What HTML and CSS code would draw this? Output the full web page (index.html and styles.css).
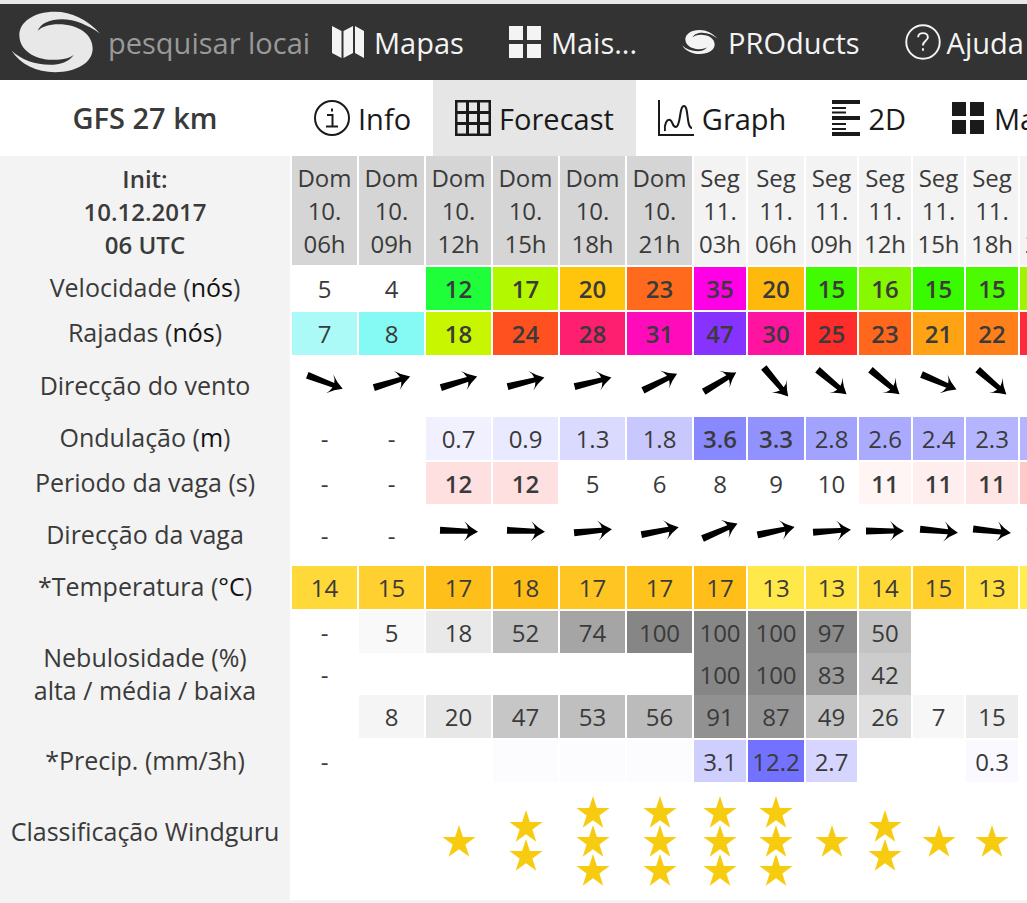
FILE: index.html
```html
<!DOCTYPE html>
<html lang="pt">
<head>
    <meta charset="UTF-8">
    <meta name="viewport" content="width=device-width, initial-scale=1.0">
    <title>Windguru - GFS 27 km</title>
    <link rel="stylesheet" href="styles.css">
</head>
<body>
    <!-- Shared shapes -->
    <svg class="defs" aria-hidden="true">
        <symbol id="swirl" viewBox="33 36 270 185">
            <path d="M300 103C262 62 215 38 165 38C100 38 58 70 58 108C58 150 100 182 160 182C190 182 212 176 222 166C208 188 180 197 150 197C105 197 65 182 35 155C60 196 110 219 165 219C230 219 278 190 278 148C278 105 235 75 175 75C148 75 125 82 113 95C122 72 150 60 185 60C225 60 265 78 300 103Z"/>
        </symbol>
        <symbol id="tiles" viewBox="0 0 32 32">
            <path d="M0 0H14V14H0ZM18 0H32V14H18ZM0 18H14V32H0ZM18 18H32V32H18Z"/>
        </symbol>
        <symbol id="arrow" viewBox="-20 -20 40 40">
            <path d="M-19 -3.500L9 -2.500Q8 -7 5 -10Q11 -4 19 0Q11 4 5 10Q8 7 9 2.500L-19 3.500Z"/>
        </symbol>
        <symbol id="star" viewBox="0 0 34 32">
            <path d="M17 0L20.9 12.1H33.6L23.4 19.6L27.3 31.7L17 24.2L6.7 31.7L10.6 19.6L.4 12.1H13.1Z"/>
        </symbol>
    </svg>

    <!-- Top bar -->
    <header class="topbar">
        <a href="#" class="logo" aria-label="Windguru"><svg><use href="#swirl"/></svg></a>
        <input type="text" class="search" placeholder="pesquisar locai" aria-label="pesquisar locais">
        <nav class="menu">
            <a href="#">
                <svg width="32" height="32" viewBox="0 0 32 32"><path d="M0 0L9.500 5V32L0 27ZM11.500 5L21 0V27L11.500 32ZM23 0L32 5V32L23 27Z"/></svg>
                Mapas
            </a>
            <a href="#"><svg width="32" height="32"><use href="#tiles"/></svg>Mais...</a>
            <a href="#"><svg width="36" height="28"><use href="#swirl"/></svg>PROducts</a>
            <a href="#" class="help">
                <svg width="36" height="36" viewBox="0 0 37 37" class="line">
                    <circle cx="18.500" cy="18.500" r="17.200"/>
                    <path d="M13.500 13.500C13.500 8 23.500 8 23.500 13.500C23.500 17.500 18.500 17 18.500 22M18.500 25V27.500"/>
                </svg>
                Ajuda
            </a>
        </nav>
    </header>

    <!-- Forecast tabs -->
    <nav class="tabs">
        <strong class="model">GFS 27 km</strong>
        <a href="#">
            <svg width="36" height="36" viewBox="0 0 36 36" class="line">
                <circle cx="18" cy="18" r="17"/>
                <path d="M18 8.500V11.500M13 15H18.500V26M12 26.500H24"/>
            </svg>
            Info
        </a>
        <a href="#" class="active">
            <svg width="36" height="36" viewBox="0 0 36 36" class="line grid">
                <path d="M1 1H35V35H1ZM12.500 1V35M23.500 1V35M1 12.500H35M1 23.500H35"/>
            </svg>
            Forecast
        </a>
        <a href="#">
            <svg width="36" height="36" viewBox="0 0 36 36" class="line">
                <path d="M1 0V35H36"/>
                <path d="M7 31C6 24 9 19 12 20C15 21 14 27 18 27C23 26 21 6 26 6C31 6 28 28 34 28"/>
            </svg>
            Graph
        </a>
        <a href="#">
            <svg width="30" height="36" viewBox="0 0 30 36">
                <path d="M2 0H30V4H2ZM2 16H30V20H2ZM2 32H30V36H2ZM2 7H16V9H2ZM2 11.500H16V13.500H2ZM2 23H16V25H2ZM2 28H16V30H2Z"/>
            </svg>
            2D
        </a>
        <a href="#"><svg width="36" height="32"><use href="#tiles"/></svg>Mais</a>
    </nav>

    <!-- Forecast table -->
    <main class="forecast">
        <table>
            <colgroup>
                <col class="col-label">
                <col span="6" class="col-wide">
                <col class="col-mid">
                <col class="col-max">
                <col class="col-min">
                <col class="col-mid">
                <col class="col-min">
                <col span="2" class="col-mid">
            </colgroup>
            <thead>
                <tr id="head"><th scope="row" class="init">Init:<br>10.12.2017<br>06 UTC</th></tr>
            </thead>
            <tbody>
                <tr id="speed"><th scope="row">Velocidade (<span>nós</span>)</th></tr>
                <tr id="gust"><th scope="row">Rajadas (<span>nós</span>)</th></tr>
                <tr id="winddir" class="tall"><th scope="row">Direcção do vento</th></tr>
                <tr id="wave"><th scope="row">Ondulação (<span>m</span>)</th></tr>
                <tr id="period" class="low"><th scope="row">Periodo da vaga (s)</th></tr>
                <tr id="wavedir" class="tall"><th scope="row">Direcção da vaga</th></tr>
                <tr id="temp"><th scope="row">*Temperatura (<span>°C</span>)</th></tr>
                <tr id="high" class="cloud"><th scope="row" rowspan="3">Nebulosidade (%)<br>alta / média / baixa</th></tr>
                <tr id="medium" class="cloud"></tr>
                <tr id="base"></tr>
                <tr id="precip" class="low"><th scope="row">*Precip. (mm/3h)</th></tr>
                <tr id="rating" class="rating"><th scope="row">Classificação Windguru</th></tr>
            </tbody>
        </table>
    </main>

    <script src="script.js"></script>
</body>
</html>
```
FILE: styles.css
```css
body {
    margin: 0;
    background-color: #f3f3f3;
    color: #3a3a3a;
    font-family: "Open Sans", sans-serif;
    font-size: 24px;
    overflow-x: hidden;
}

a {
    color: inherit;
    text-decoration: none;
}

svg {
    flex: none;
    fill: currentColor;
}

.defs {
    position: absolute;
    width: 0;
    height: 0;
}

.line {
    fill: none;
    stroke: currentColor;
    stroke-width: 2;
}

.grid {
    stroke-width: 3;
}

/* Top bar */
.topbar {
    display: flex;
    align-items: center;
    height: 76px;
    border-top: 4px solid #e8e8e8;
    background-color: #333333;
    color: #f4f4f4;
    overflow: hidden;
}

.logo {
    flex: none;
    margin-left: 11px;
    color: #e8e8e8;
}

.logo svg {
    display: block;
    width: 90px;
    height: 62px;
}

.search {
    flex: none;
    box-sizing: border-box;
    width: 231px;
    padding: 0 0 0 7px;
    border: none;
    background: none;
    color: #f4f4f4;
    font: inherit;
    font-size: 29px;
}

.search::placeholder {
    color: #999999;
    opacity: 1;
}

.menu {
    display: flex;
    gap: 45px;
    font-size: 29px;
    white-space: nowrap;
}

.menu a {
    display: flex;
    align-items: center;
    gap: 10px;
}

.menu .help {
    gap: 6px;
}

/* Tabs */
.tabs {
    display: flex;
    height: 76px;
    background-color: #ffffff;
    font-size: 29px;
    white-space: nowrap;
    overflow: hidden;
}

.model {
    flex: none;
    width: 290px;
    margin-right: 2px;
    font-size: 29px;
    line-height: 76px;
    font-weight: 600;
    text-align: center;
}

.tabs a {
    display: flex;
    flex: none;
    align-items: center;
    gap: 8px;
    padding: 0 22px;
    color: #1a1a1a;
}

.tabs .active {
    background-color: #e6e6e6;
}

/* Forecast table */
.forecast {
    overflow: hidden;
}

table {
    width: 1074px;
    table-layout: fixed;
    border-spacing: 0;
    background-color: #ffffff;
    line-height: 33px;
    text-align: center;
}

.col-label { width: 292px; }
.col-wide { width: 67px; }
.col-max { width: 58px; }
.col-mid { width: 54px; }
.col-min { width: 53px; }

tr {
    height: 45px;
}

th,
td {
    box-sizing: border-box;
    padding: 0;
    border-right: 2px solid #ffffff;
    font-weight: 400;
    white-space: nowrap;
}

td,
thead th {
    border-bottom: 2px solid #ffffff;
}

th {
    background-color: #f3f3f3;
}

tbody th {
    padding-bottom: 4px;
    font-size: 25px;
}

th span {
    color: #111111;
}

thead tr {
    height: 111px;
}

thead .init {
    border-bottom: none;
    font-weight: 600;
}

.day {
    background-color: #d5d5d5;
}

.strong {
    font-weight: 600;
}

.tall {
    height: 60px;
}

.low {
    height: 44px;
}

.cloud {
    height: 42px;
}

.cloud td {
    border-bottom: none;
}

.rating {
    height: 116px;
}

.rating th {
    padding-bottom: 22px;
}

.rating td {
    padding-bottom: 4px;
}

.arrow {
    display: block;
    width: 40px;
    height: 40px;
    margin: 0 auto;
    padding-bottom: 8px;
    color: #000000;
}

.star {
    display: block;
    width: 34px;
    height: 32px;
    margin: 0 auto -3px;
    color: #f7cc10;
}
```
FILE: script.js
```js
const hours = ['06', '09', '12', '15', '18', '21', '03', '06', '09', '12', '15', '18', '21'];

// Rows of numbers with the colour of each cell
const rows = {
    speed: {
        values: [5, 4, 12, 17, 20, 23, 35, 20, 15, 16, 15, 15, 16],
        colors: ['', '', '#1eff3a', '#b4f800', '#ffc50d', '#ff6a1c', '#ff00e6', '#ffb90d', '#43fb00', '#86f800', '#39fb00', '#4dfb00', '#9df500'],
        strongFrom: 12
    },
    gust: {
        values: [7, 8, 18, 24, 28, 31, 47, 30, 25, 23, 21, 22, 25],
        colors: ['#abfaf7', '#85f9f3', '#c8f500', '#ff5020', '#ff1f70', '#ff0bbb', '#8733ff', '#ff14a0', '#ff2c2c', '#ff681c', '#ffa314', '#ff801a', '#ff2a3a'],
        strongFrom: 12
    },
    wave: {
        values: ['-', '-', '0.7', '0.9', '1.3', '1.8', '3.6', '3.3', '2.8', '2.6', '2.4', '2.3', '2.3'],
        colors: ['', '', '#f0f0ff', '#e9e9ff', '#dadaff', '#c8c8ff', '#8888ff', '#9292ff', '#a2a2ff', '#aaaaff', '#b0b0ff', '#b5b5ff', '#b5b5ff'],
        strongFrom: 3
    },
    period: {
        values: ['-', '-', 12, 12, 5, 6, 8, 9, 10, 11, 11, 11, 12],
        colors: ['', '', '#ffe0e0', '#ffe0e0', '', '', '', '', '', '#fff5f5', '#ffeeee', '#ffe6e6', '#ffc9c9'],
        strongFrom: 11
    },
    temp: {
        values: [14, 15, 17, 18, 17, 17, 17, 13, 13, 14, 15, 13, 12],
        colors: ['#ffd83a', '#ffd02f', '#ffbf1a', '#ffbd18', '#ffc522', '#ffc31e', '#ffbe1a', '#ffe84a', '#ffe342', '#ffd938', '#ffcf2c', '#ffdf3e', '#fff04f']
    },
    precip: {
        values: ['-', '', '', '', '', '', '3.1', '12.2', '2.7', '', '', '0.3', ''],
        colors: ['', '', '', '#fcfcff', '#fcfcff', '#fcfcff', '#ceceff', '#7272ff', '#d5d5ff', '', '', '#f9f9ff', '']
    }
};

// Cloud cover in percent
const clouds = {
    high: ['-', 5, 18, 52, 74, 100, 100, 100, 97, 50, '', '', ''],
    medium: ['-', '', '', '', '', '', 100, 100, 83, 42, '', '', ''],
    base: ['', 8, 20, 47, 53, 56, 91, 87, 49, 26, 7, 15, '']
};

// Clockwise angle from east
const directions = {
    winddir: [21, -17, -17, -14, -14, -26, -31, 50, 40, 40, 23, 41, 45],
    wavedir: [null, null, 2, 2, -5, -11, -23, -12, -4, 0, 5, 6, 15]
};

const stars = [0, 0, 1, 2, 3, 3, 3, 3, 1, 2, 1, 1, 0];

function addCell(rowId, html, color, strong) {
    const td = document.createElement('td');
    td.innerHTML = html;
    if (color) td.style.backgroundColor = color;
    if (strong) td.className = 'strong';
    document.getElementById(rowId).appendChild(td);
}

hours.forEach((hour, i) => {
    const th = document.createElement('th');
    th.scope = 'col';
    th.innerHTML = (i < 6 ? 'Dom<br>10.<br>' : 'Seg<br>11.<br>') + hour + 'h';
    if (i < 6) th.className = 'day';
    document.getElementById('head').appendChild(th);
});

for (const id in rows) {
    const row = rows[id];
    row.values.forEach((value, i) => addCell(id, value, row.colors[i], value >= row.strongFrom));
}

for (const id in clouds) {
    clouds[id].forEach(value => {
        const gray = Math.round(255 - 1.21 * value);
        addCell(id, value, value > 0 ? `rgb(${gray}, ${gray}, ${gray})` : '');
    });
}

for (const id in directions) {
    directions[id].forEach(angle => {
        addCell(id, angle === null ? '-' : `<svg class="arrow" viewBox="-20 -20 40 40"><use href="#arrow" x="-20" y="-20" width="40" height="40" transform="rotate(${angle})"/></svg>`);
    });
}

stars.forEach(count => addCell('rating', '<svg class="star"><use href="#star"/></svg>'.repeat(count)));
```
